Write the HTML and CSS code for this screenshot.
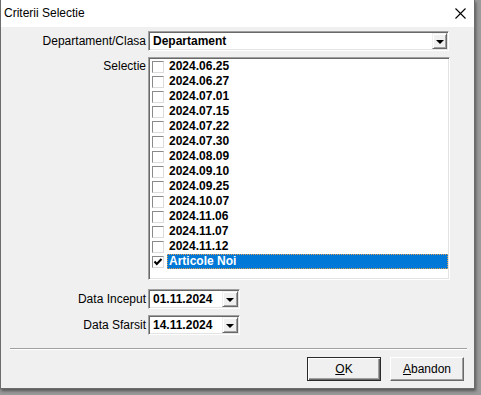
FILE: index.html
```html
<!DOCTYPE html>
<html lang="ro">
<head>
    <meta charset="UTF-8">
    <title>Criterii Selectie</title>
    <link rel="stylesheet" href="styles.css">
</head>
<body>
    <div class="window">
        <div class="titlebar">
            <span class="title">Criterii Selectie</span>
            <svg class="close" width="11" height="11" viewBox="0 0 11 11">
                <path d="M0.5 0.5 L10.5 10.5 M10.5 0.5 L0.5 10.5" stroke="#000" stroke-width="1.1" fill="none"/>
            </svg>
        </div>

        <div class="content">
            <div class="form">
                <label class="lbl">Departament/Clasa</label>
                <div class="combo">
                    <span class="combo-text">Departament</span>
                    <span class="drop"><i class="arrow"></i></span>
                </div>

                <label class="lbl lbl-top">Selectie</label>
                <div class="listbox">
                    <div class="item"><span class="chk"></span><span class="txt">2024.06.25</span></div>
                    <div class="item"><span class="chk"></span><span class="txt">2024.06.27</span></div>
                    <div class="item"><span class="chk"></span><span class="txt">2024.07.01</span></div>
                    <div class="item"><span class="chk"></span><span class="txt">2024.07.15</span></div>
                    <div class="item"><span class="chk"></span><span class="txt">2024.07.22</span></div>
                    <div class="item"><span class="chk"></span><span class="txt">2024.07.30</span></div>
                    <div class="item"><span class="chk"></span><span class="txt">2024.08.09</span></div>
                    <div class="item"><span class="chk"></span><span class="txt">2024.09.10</span></div>
                    <div class="item"><span class="chk"></span><span class="txt">2024.09.25</span></div>
                    <div class="item"><span class="chk"></span><span class="txt">2024.10.07</span></div>
                    <div class="item"><span class="chk"></span><span class="txt">2024.11.06</span></div>
                    <div class="item"><span class="chk"></span><span class="txt">2024.11.07</span></div>
                    <div class="item"><span class="chk"></span><span class="txt">2024.11.12</span></div>
                    <div class="item selected">
                        <span class="chk">
                            <svg width="10" height="10" viewBox="0 0 10 10">
                                <path d="M1.5 4.5 L3.8 7 L8.5 2" stroke="#000" stroke-width="2" fill="none"/>
                            </svg>
                        </span>
                        <span class="txt">Articole Noi</span>
                    </div>
                </div>

                <label class="lbl date-first">Data Inceput</label>
                <div class="datebox date-first">
                    <span class="combo-text">01.11.2024</span>
                    <span class="drop"><i class="arrow"></i></span>
                </div>

                <label class="lbl">Data Sfarsit</label>
                <div class="datebox">
                    <span class="combo-text">14.11.2024</span>
                    <span class="drop"><i class="arrow"></i></span>
                </div>
            </div>

            <div class="separator"></div>

            <div class="buttons">
                <button class="btn btn-default"><u>O</u>K</button>
                <button class="btn"><u>A</u>bandon</button>
            </div>
        </div>
    </div>
</body>
</html>
```

FILE: styles.css
```css
* {
    margin: 0;
    padding: 0;
    box-sizing: border-box;
    font-family: 'Liberation Sans', Arial, sans-serif;
}

body {
    background: #9a9a9a;
    width: 481px;
    height: 395px;
    overflow: hidden;
}

/* fereastra */
.window {
    width: 475px;
    height: 389px;
    background: #f0f0f0;
    border: 1px solid #6c6c6c;
    border-top: 0;
    box-shadow: 1px 2px 3px rgba(0,0,0,0.45);
    display: flex;
    flex-direction: column;
}

.titlebar {
    height: 27px;
    background: #fff;
    display: flex;
    align-items: center;
    justify-content: space-between;
    padding: 0 8px 1px 3px;
}

.title {
    font-size: 12px;
    color: #000;
}

.close {
    display: block;
    margin-top: 1px;
}

.content {
    flex: 1;
    display: flex;
    flex-direction: column;
    padding-top: 4px;
}

/* formular */
.form {
    display: grid;
    grid-template-columns: 145px 302px;
    column-gap: 2px;
    row-gap: 6px;
    align-items: center;
}

.lbl {
    font-size: 12px;
    color: #000;
    text-align: right;
}

.lbl-top {
    align-self: start;
    line-height: 15px;
    padding-top: 2px;
}

.date-first {
    margin-top: 3px;
}

/* combo si date */
.combo,
.datebox,
.listbox {
    background: #fff;
    border: 1px solid;
    border-color: #a0a0a0 #fff #fff #a0a0a0;
    box-shadow: inset 1px 1px #696969, inset -1px -1px #e3e3e3;
}

.combo,
.datebox {
    height: 20px;
    display: flex;
    align-items: stretch;
    padding: 1px;
}

.combo {
    width: 301px;
}

.datebox {
    width: 92px;
}

.combo-text {
    flex: 1;
    font-size: 12px;
    font-weight: bold;
    line-height: 16px;
    padding-left: 3px;
    color: #000;
}

.drop {
    width: 15px;
    background: #f0f0f0;
    border: 1px solid;
    border-color: #f0f0f0 #696969 #696969 #f0f0f0;
    box-shadow: inset 1px 1px #fff, inset -1px -1px #a0a0a0;
    display: flex;
    align-items: center;
    justify-content: center;
}

.datebox .drop {
    width: 16px;
}

.arrow {
    width: 0;
    height: 0;
    border-left: 4px solid transparent;
    border-right: 4px solid transparent;
    border-top: 4px solid #000;
    margin-top: 1px;
}

/* lista */
.listbox {
    width: 302px;
    height: 223px;
    padding: 1px;
}

.item {
    height: 15px;
    display: flex;
    align-items: center;
    padding-left: 2px;
}

.chk {
    width: 12px;
    height: 12px;
    background: #fff;
    border: 1px solid;
    border-color: #8a8a8a #dcdcdc #dcdcdc #8a8a8a;
    display: flex;
    align-items: center;
    justify-content: center;
    margin-right: 3px;
}

.chk svg {
    display: block;
}

.txt {
    flex: 1;
    height: 15px;
    font-size: 12px;
    font-weight: bold;
    line-height: 13px;
    padding-left: 1px;
    color: #000;
    border: 1px solid transparent;
}

.selected .txt {
    background: #0078d7;
    color: #fff;
    border: 1px dotted #e0a050;
}

/* subsol */
.separator {
    margin: 13px 7px 0 9px;
    border-top: 1px solid #a0a0a0;
    border-bottom: 1px solid #fff;
}

.buttons {
    display: flex;
    justify-content: flex-end;
    gap: 9px;
    padding: 7px 10px 0 0;
}

.btn {
    width: 74px;
    height: 24px;
    background: #f0f0f0;
    font-size: 12px;
    color: #000;
    border: 1px solid;
    border-color: #fff #696969 #696969 #fff;
    box-shadow: inset -1px -1px #a0a0a0;
}

.btn-default {
    border: 1px solid #2a2a2a;
    box-shadow: inset 1px 1px #fff, inset -1px -1px #696969, inset -2px -2px #a0a0a0;
}
```
